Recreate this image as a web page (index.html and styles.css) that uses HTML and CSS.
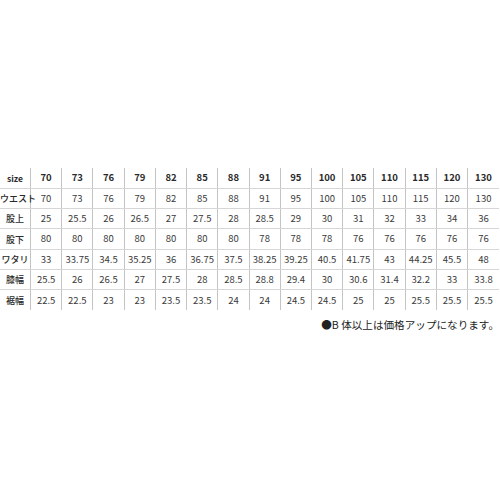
FILE: index.html
```html
<!DOCTYPE html>
<html lang="ja">
<head>
<meta charset="utf-8">
<link rel="stylesheet" href="styles.css">
</head>
<body>
<div class="page">
  <table class="sizes">
    <colgroup><col class="c-label"><col span="15" class="c-val"></colgroup>
    <tr class="head"><th>size</th><th>70</th><th>73</th><th>76</th><th>79</th><th>82</th><th>85</th><th>88</th><th>91</th><th>95</th><th>100</th><th>105</th><th>110</th><th>115</th><th>120</th><th>130</th></tr>
    <tr><th>ウエスト</th><td>70</td><td>73</td><td>76</td><td>79</td><td>82</td><td>85</td><td>88</td><td>91</td><td>95</td><td>100</td><td>105</td><td>110</td><td>115</td><td>120</td><td>130</td></tr>
    <tr><th>股上</th><td>25</td><td>25.5</td><td>26</td><td>26.5</td><td>27</td><td>27.5</td><td>28</td><td>28.5</td><td>29</td><td>30</td><td>31</td><td>32</td><td>33</td><td>34</td><td>36</td></tr>
    <tr><th>股下</th><td>80</td><td>80</td><td>80</td><td>80</td><td>80</td><td>80</td><td>80</td><td>78</td><td>78</td><td>78</td><td>76</td><td>76</td><td>76</td><td>76</td><td>76</td></tr>
    <tr><th>ワタリ</th><td>33</td><td>33.75</td><td>34.5</td><td>35.25</td><td>36</td><td>36.75</td><td>37.5</td><td>38.25</td><td>39.25</td><td>40.5</td><td>41.75</td><td>43</td><td>44.25</td><td>45.5</td><td>48</td></tr>
    <tr><th>膝幅</th><td>25.5</td><td>26</td><td>26.5</td><td>27</td><td>27.5</td><td>28</td><td>28.5</td><td>28.8</td><td>29.4</td><td>30</td><td>30.6</td><td>31.4</td><td>32.2</td><td>33</td><td>33.8</td></tr>
    <tr class="last"><th>裾幅</th><td>22.5</td><td>22.5</td><td>23</td><td>23</td><td>23.5</td><td>23.5</td><td>24</td><td>24</td><td>24.5</td><td>24.5</td><td>25</td><td>25</td><td>25.5</td><td>25.5</td><td>25.5</td></tr>
  </table>
  <p class="note">●B 体以上は価格アップになります。</p>
</div>
</body>
</html>
```

FILE: styles.css
```css
html, body {
  margin: 0;
  padding: 0;
  background: #ffffff;
}
.page {
  width: 500px;
  height: 500px;
  padding-top: 168px;
  box-sizing: border-box;
  font-family: "Noto Sans CJK JP", "Noto Sans", sans-serif;
  color: #333333;
}
.sizes {
  border-collapse: collapse;
  table-layout: fixed;
  width: 499px;
}
.c-label { width: 30.5px; }
.c-val { width: 31.23px; }
.sizes th,
.sizes td {
  height: 20.33px;
  padding: 0;
  text-align: center;
  vertical-align: middle;
  font-size: 9.5px;
  line-height: 1;
  font-weight: normal;
  color: #3a3a3a;
  border-bottom: 1px solid #d6d6d6;
  border-left: 1px solid #c4c4c4;
  white-space: nowrap;
  box-sizing: border-box;
}
.sizes th:first-child { border-left: none; }
.sizes th { font-size: 9px; font-weight: 500; color: #2a2a2a; }
.sizes .head th { font-weight: bold; font-size: 9.5px; color: #2a2a2a; }
.sizes .head th:first-child { font-size: 8.5px; }
.sizes .last th,
.sizes .last td { border-bottom: none; }
.note {
  margin: 8px 0 0 0;
  padding-right: 1px;
  text-align: right;
  font-size: 10.6px;
  line-height: 14px;
  color: #222222;
}
```
